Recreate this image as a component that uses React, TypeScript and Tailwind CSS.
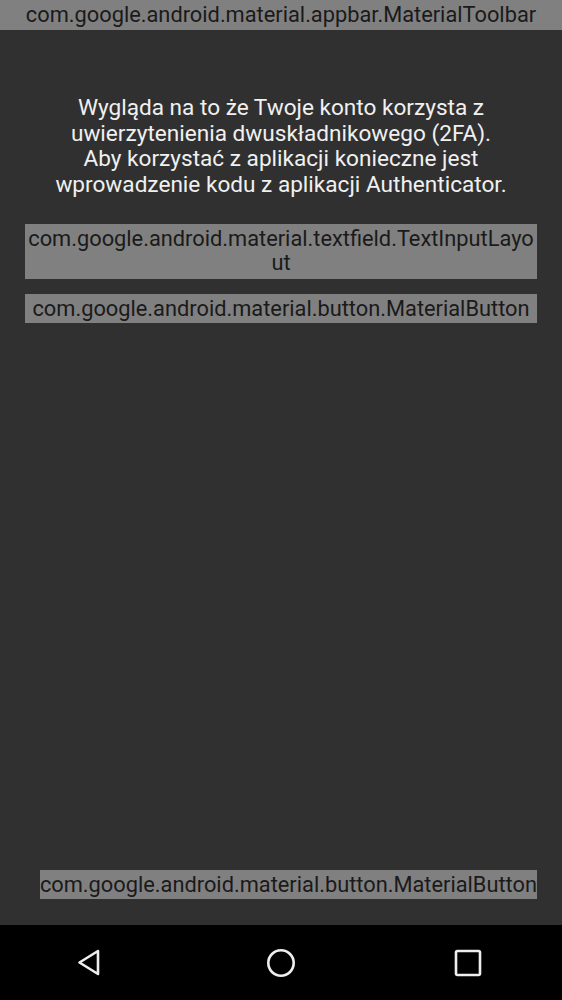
export default function App() {
  return (
    <div className="flex h-[1000px] w-[562px] flex-col bg-[#303030] font-['Roboto',sans-serif]">
      <header className="flex h-[30px] items-center justify-center bg-[#808080] text-[21.8px] leading-[26px] text-[#1a1a1a]">
        com.google.android.material.appbar.MaterialToolbar
      </header>

      <main className="flex flex-1 flex-col px-[25px]">
        <p className="mt-[65px] text-center text-[22.6px] leading-[25.7px] text-[#f0f0f0]">
          Wygląda na to że Twoje konto korzysta z
          <br />
          uwierzytenienia dwuskładnikowego (2FA).
          <br />
          Aby korzystać z aplikacji konieczne jest
          <br />
          wprowadzenie kodu z aplikacji Authenticator.
        </p>

        <div className="mt-[26px] h-[55px] bg-[#808080] px-[1px] pt-[3px] text-center text-[21.8px] leading-[24px] break-all text-[#1a1a1a]">
          com.google.android.material.textfield.TextInputLayout
        </div>

        <div className="mt-[15px] h-[29px] bg-[#808080] text-center text-[21.8px] leading-[29px] text-[#1a1a1a]">
          com.google.android.material.button.MaterialButton
        </div>

        <div className="mt-auto mb-[26px] flex justify-end">
          <div className="h-[29px] bg-[#808080] text-[21.8px] leading-[29px] text-[#1a1a1a]">
            com.google.android.material.button.MaterialButton
          </div>
        </div>
      </main>

      <nav className="flex h-[75px] items-center bg-black">
        <div className="flex flex-1 justify-center pl-[16px]">
          <svg width="28" height="32" viewBox="0 0 28 32" className="ml-[-31px]">
            <path d="M23 4 L4.5 15.5 L23 27 Z" fill="none" stroke="#eee" strokeWidth="2.6" strokeLinejoin="round" />
          </svg>
        </div>
        <div className="flex flex-1 justify-center">
          <svg width="30" height="30" viewBox="0 0 30 30">
            <circle cx="15" cy="15" r="12.7" fill="none" stroke="#eee" strokeWidth="2.6" />
          </svg>
        </div>
        <div className="flex flex-1 justify-center pr-[16px]">
          <svg width="28" height="28" viewBox="0 0 28 28" className="mr-[-20px]">
            <rect x="2" y="2" width="24" height="24" rx="1.5" fill="none" stroke="#eee" strokeWidth="2.6" />
          </svg>
        </div>
      </nav>
    </div>
  )
}
